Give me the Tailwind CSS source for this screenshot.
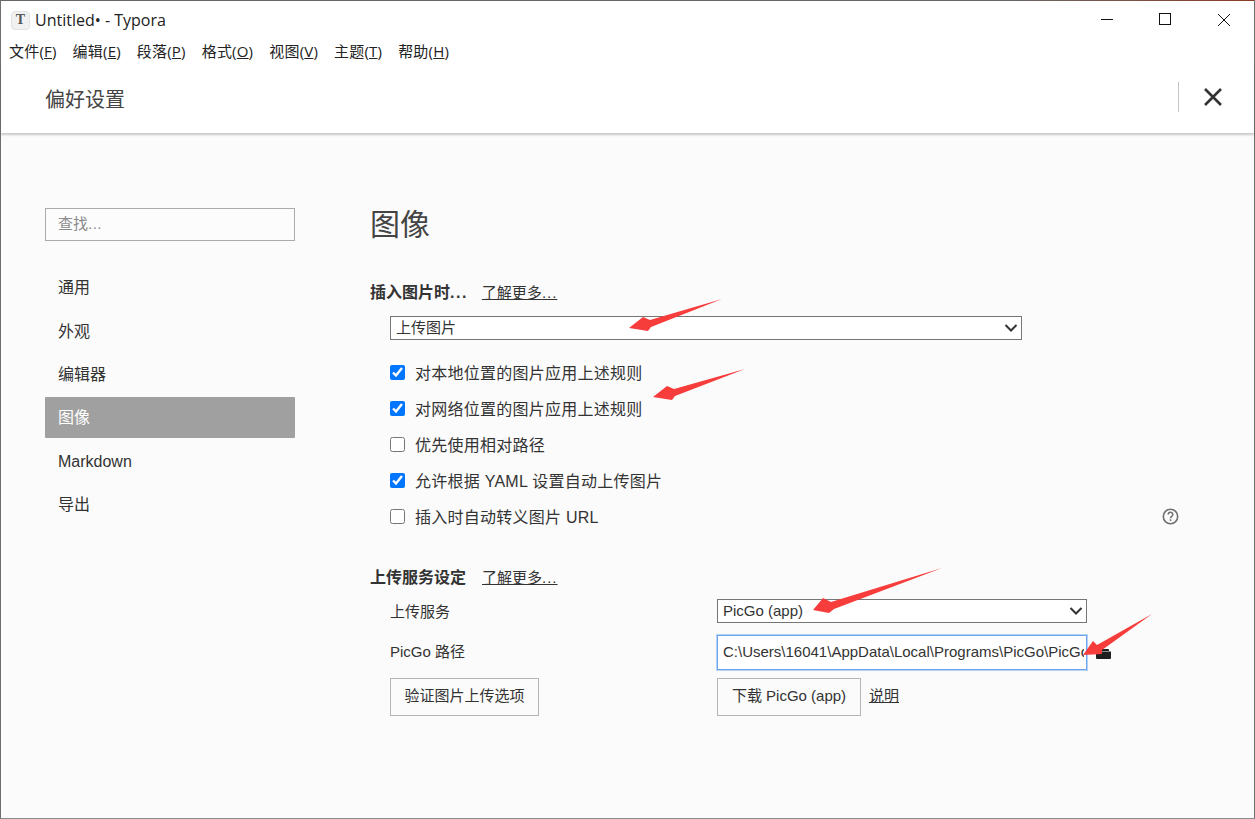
<!DOCTYPE html>
<html lang="zh-CN">
<head>
    <meta charset="UTF-8">
    <title>Untitled• - Typora</title>
    <script src="https://cdn.jsdelivr.net/npm/@tailwindcss/browser@4"></script>
</head>
<body class="overflow-hidden bg-white">
    <div class="relative w-[1255px] h-[819px] flex flex-col border-x border-x-[#6f6f6f] border-b border-b-[#8a8a8a] text-[#333] font-['Liberation_Sans','Noto_Sans_CJK_SC',sans-serif]">
        <!-- top edge, desktop showing through -->
        <div class="h-px shrink-0 bg-gradient-to-r from-[#666] via-[#666] via-80% to-[#8a3a22]"></div>

        <!-- title bar -->
        <div class="h-[38px] shrink-0 flex items-center bg-white">
            <div class="ml-[10px] w-[19px] h-[19px] rounded-[4px] bg-[#f1f1f1] border border-[#e2e2e2] flex items-center justify-center text-[14px] leading-none font-bold text-[#555] font-['Liberation_Serif',serif]">T</div>
            <div class="ml-[5px] -mt-[1px] text-[16px] text-[#222] font-['Open_Sans',sans-serif]">Untitled• - Typora</div>
            <div class="ml-auto flex items-center">
                <svg class="w-[58px] h-[38px]" viewBox="0 0 58 38"><path d="M23 18.500h12" stroke="#111" stroke-width="1"/></svg>
                <svg class="w-[58px] h-[38px] ml-[1px]" viewBox="0 0 58 38"><rect x="22.500" y="12.500" width="11" height="11" fill="none" stroke="#111" stroke-width="1"/></svg>
                <svg class="w-[59px] h-[38px]" viewBox="0 0 59 38"><path d="M23 13l12 12M35 13L23 25" stroke="#111" stroke-width="1" fill="none"/></svg>
            </div>
        </div>

        <!-- menu bar -->
        <div class="h-[25px] shrink-0 flex items-center pl-[8px] gap-[16px] text-[15px] tracking-[0.200px] text-[#222] bg-white font-['Open_Sans','Noto_Sans_CJK_SC',sans-serif]">
            <span>文件(<u>F</u>)</span>
            <span>编辑(<u>E</u>)</span>
            <span>段落(<u>P</u>)</span>
            <span>格式(<u>O</u>)</span>
            <span>视图(<u>V</u>)</span>
            <span>主题(<u>T</u>)</span>
            <span>帮助(<u>H</u>)</span>
        </div>

        <!-- preferences header -->
        <div class="h-[69px] shrink-0 flex items-center bg-white shadow-[0_2px_2px_rgba(0,0,0,0.2)] relative z-10">
            <div class="ml-[44px] mt-[3px] text-[20px] text-[#444]">偏好设置</div>
            <div class="ml-auto w-px h-[30px] -mt-[3px] bg-[#c4c4c4]"></div>
            <svg class="ml-[24px] mr-[31px] w-[20px] h-[20px] -mt-[3px]" viewBox="0 0 20 20"><path d="M2 2l16 16M18 2L2 18" stroke="#333" stroke-width="2.600" fill="none"/></svg>
        </div>

        <!-- body -->
        <div class="flex-1 flex bg-[#fbfbfb]">
            <!-- sidebar -->
            <div class="w-[250px] ml-[44px] pt-[75px] shrink-0 text-[16px]">
                <div class="h-[33px] border border-[#ababab] flex items-center pl-[12px] text-[15px] text-[#8a8a8a] bg-[#fcfcfc]">查找<span class="tracking-[0.500px]">...</span></div>
                <div class="mt-[25px] flex flex-col">
                    <div class="h-[43.500px] flex items-center pl-[13px]">通用</div>
                    <div class="h-[43.500px] pt-px flex items-center pl-[13px]">外观</div>
                    <div class="h-[43.500px] pt-px flex items-center pl-[13px]">编辑器</div>
                    <div class="h-[41px] mb-[2px] pt-px flex items-center pl-[13px] bg-[#a0a0a0] text-white rounded-[1px]">图像</div>
                    <div class="h-[43.500px] pt-px flex items-center pl-[13px]">Markdown</div>
                    <div class="h-[43.500px] pt-px flex items-center pl-[13px]">导出</div>
                </div>
            </div>

            <!-- content -->
            <div class="ml-[75px] pt-[71px] w-[810px] text-[16px]">
                <h1 class="h-[41px] flex items-center text-[30px] text-[#444] leading-none">图像</h1>

                <div class="mt-[36px] h-[24px] flex items-center gap-[14px]">
                    <span class="font-bold text-[#333]">插入图片时<span class="tracking-[1.500px]">...</span></span>
                    <a class="underline text-[15px]">了解更多<span class="tracking-[1px]">...</span></a>
                </div>

                <div class="relative mt-[11px] ml-[20px] w-[632px] h-[24px]">
                    <select class="appearance-none block w-full h-full pl-[5px] text-[15px] bg-white border border-[#767676] text-[#333]">
                        <option>上传图片</option>
                    </select>
                    <svg class="absolute right-[4px] top-[7px] w-[14px] h-[10px] pointer-events-none" viewBox="0 0 14 10"><path d="M1.500 2l5.500 5.500L12.500 2" fill="none" stroke="#333" stroke-width="2"/></svg>
                </div>

                <div class="mt-[16px] ml-[20px] flex flex-col tracking-[0.250px]">
                    <label class="h-[36px] flex items-center gap-[10px]"><input type="checkbox" checked class="w-[15px] h-[15px] m-0 -mt-[3px]"><span>对本地位置的图片应用上述规则</span></label>
                    <label class="h-[36px] flex items-center gap-[10px]"><input type="checkbox" checked class="w-[15px] h-[15px] m-0 -mt-[3px]"><span>对网络位置的图片应用上述规则</span></label>
                    <label class="h-[36px] flex items-center gap-[10px]"><input type="checkbox" class="w-[15px] h-[15px] m-0 -mt-[3px]"><span>优先使用相对路径</span></label>
                    <label class="h-[36px] flex items-center gap-[10px]"><input type="checkbox" checked class="w-[15px] h-[15px] m-0 -mt-[3px]"><span>允许根据 YAML 设置自动上传图片</span></label>
                    <div class="h-[36px] flex items-center">
                        <label class="flex items-center gap-[10px]"><input type="checkbox" class="w-[15px] h-[15px] m-0 -mt-[3px]"><span>插入时自动转义图片 URL</span></label>
                        <svg class="ml-auto mr-px -mt-[3px] w-[17px] h-[17px]" viewBox="0 0 17 17"><circle cx="8.500" cy="8.500" r="7.200" fill="none" stroke="#707070" stroke-width="1.600"/><path d="M6.200 6.600c0-3 4.600-3 4.600-.2 0 1.900-2.300 1.900-2.300 3.800" fill="none" stroke="#707070" stroke-width="1.500"/><rect x="7.700" y="11.300" width="1.600" height="1.600" fill="#707070"/></svg>
                    </div>
                </div>

                <div class="mt-[30px] h-[24px] flex items-center gap-[16px]">
                    <span class="font-bold text-[#333]">上传服务设定</span>
                    <a class="underline text-[15px]">了解更多<span class="tracking-[1px]">...</span></a>
                </div>

                <div class="mt-[9px] ml-[20px] flex items-center">
                    <div class="w-[327px] pt-[2px] text-[15px]">上传服务</div>
                    <div class="relative w-[370px] h-[24px]">
                        <select class="appearance-none block w-full h-full pl-[5px] text-[15px] bg-white border border-[#767676] text-[#333]">
                            <option>PicGo (app)</option>
                        </select>
                        <svg class="absolute right-[4px] top-[7px] w-[14px] h-[10px] pointer-events-none" viewBox="0 0 14 10"><path d="M1.500 2l5.500 5.500L12.500 2" fill="none" stroke="#333" stroke-width="2"/></svg>
                    </div>
                </div>

                <div class="mt-[11px] ml-[20px] flex items-center">
                    <div class="w-[327px] text-[15px]">PicGo 路径</div>
                    <input type="text" value="C:\Users\16041\AppData\Local\Programs\PicGo\PicGo.exe" class="w-[370px] h-[35px] pl-[5px] pr-[2px] pb-[1px] text-[15px] bg-white border border-[#6aa6ee] shadow-[0_0_0_1px_#b5d2f6] outline-none text-[#333]">
                    <svg class="ml-[9px] w-[15px] h-[12px] mt-[1px]" viewBox="0 0 15 12"><path d="M1 3V1.500q0-1 1-1h3l1.500 1.500H12q1 0 1 1v1H2zM0 4.500h15V11q0 1-1 1H1q-1 0-1-1z" fill="#1f1f1f"/></svg>
                </div>

                <div class="mt-[8px] ml-[20px] flex items-center">
                    <div class="w-[327px]">
                        <button class="w-[149px] h-[38px] border border-[#b5b5b5] bg-[#fbfbfb] text-[15px] text-[#333]">验证图片上传选项</button>
                    </div>
                    <button class="w-[144px] h-[38px] border border-[#b5b5b5] bg-[#fbfbfb] text-[15px] text-[#333]">下载 PicGo (app)</button>
                    <a class="ml-[8px] underline text-[15px]">说明</a>
                </div>
            </div>
        </div>

        <!-- red annotation arrows drawn over the screenshot -->
        <svg class="absolute left-[-1px] top-0 pointer-events-none z-20" width="1255" height="819" viewBox="0 0 1255 819">
            <polygon points="722,299 650,320 643,317 629,328 648,331 651,327" fill="#f73c3c"/>
            <polygon points="745,369 674,389 667,386 653,397 672,400 675,396" fill="#f73c3c"/>
            <polygon points="942,568 831,602 823,598 813,610 829,613 834,609" fill="#f73c3c"/>
            <polygon points="1152,614 1097,645 1093,641 1083,655 1102,654 1102,650" fill="#f73c3c"/>
        </svg>
    </div>
</body>
</html>
